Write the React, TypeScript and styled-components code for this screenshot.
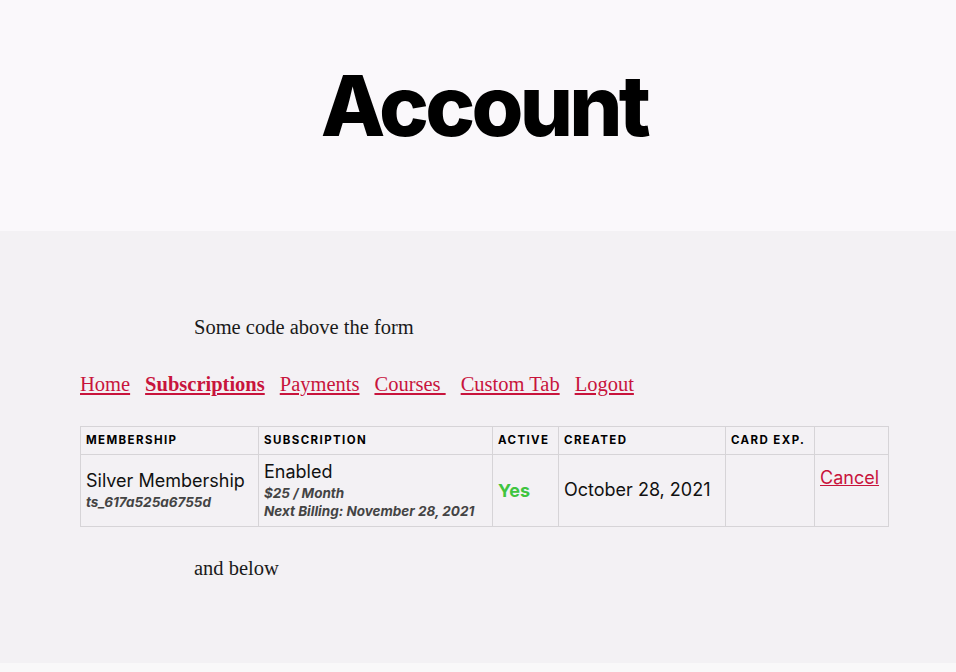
import styled, { createGlobalStyle } from "styled-components";

const GlobalStyle = createGlobalStyle`
  body {
    margin: 0;
    background: #f3f1f4;
    font-family: "Liberation Serif", serif;
  }
`;

const tabs = [
  { label: "Home" },
  { label: "Subscriptions", active: true },
  { label: "Payments" },
  { label: "Courses " },
  { label: "Custom Tab" },
  { label: "Logout" },
];

export default function App() {
  return (
    <Page>
      <GlobalStyle />
      <Header>
        <Title>Account</Title>
      </Header>
      <Content>
        <Note>Some code above the form</Note>
        <Nav>
          {tabs.map((t) => (
            <NavLink key={t.label} href="#" $active={t.active}>
              {t.label}
            </NavLink>
          ))}
        </Nav>
        <Table>
          <colgroup>
            <col style={{ width: 178 }} />
            <col style={{ width: 234 }} />
            <col style={{ width: 66 }} />
            <col style={{ width: 167 }} />
            <col style={{ width: 89 }} />
            <col style={{ width: 74 }} />
          </colgroup>
          <thead>
            <tr>
              <Th>Membership</Th>
              <Th>Subscription</Th>
              <Th>Active</Th>
              <Th>Created</Th>
              <Th>Card Exp.</Th>
              <Th></Th>
            </tr>
          </thead>
          <tbody>
            <tr>
              <Td>
                <Main>Silver Membership</Main>
                <Sub>ts_617a525a6755d</Sub>
              </Td>
              <Td>
                <Main>Enabled</Main>
                <Sub>$25 / Month</Sub>
                <Sub>Next Billing: November 28, 2021</Sub>
              </Td>
              <Td>
                <Yes>Yes</Yes>
              </Td>
              <Td>
                <Main>October 28, 2021</Main>
              </Td>
              <Td></Td>
              <Td $top>
                <CancelLink href="#">Cancel</CancelLink>
              </Td>
            </tr>
          </tbody>
        </Table>
        <Note>and below</Note>
      </Content>
      <Footer />
    </Page>
  );
}

const Page = styled.div`
  min-height: 672px;
  display: flex;
  flex-direction: column;
`;

const Header = styled.header`
  height: 231px;
  background: #faf8fb;
  display: flex;
  align-items: center;
  justify-content: center;
`;

const Title = styled.h1`
  margin: 0;
  font-family: Inter, "Liberation Sans", sans-serif;
  font-weight: 800;
  font-size: 84px;
  letter-spacing: -0.045em;
  color: #000;
  line-height: 1;
  transform: translate(6px, -10px);
`;

const Content = styled.main`
  flex: 1;
  padding: 83px 68px 0 80px;
`;

const Note = styled.p`
  margin: 0;
  padding-left: 114px;
  font-size: 20.5px;
  color: #1a1a1a;
  line-height: 1.3;
`;

const Nav = styled.nav`
  display: flex;
  gap: 15px;
  margin: 32px 0 30px;
`;

const NavLink = styled.a<{ $active?: boolean }>`
  font-size: 20.5px;
  color: #c8143c;
  white-space: pre;
  font-weight: ${(p) => (p.$active ? 700 : 400)};
  text-decoration: underline;
`;

const Table = styled.table`
  width: 808px;
  border-collapse: collapse;
  table-layout: fixed;
  font-family: Inter, "Liberation Sans", sans-serif;
  margin-bottom: 28px;
`;

const Th = styled.th`
  border: 1px solid #d6d4d7;
  text-align: left;
  padding: 6px 5px;
  height: 15px;
  font-size: 11.5px;
  font-weight: 700;
  letter-spacing: 1.4px;
  text-transform: uppercase;
  color: #000;
`;

const Td = styled.td<{ $top?: boolean }>`
  border: 1px solid #d6d4d7;
  padding: 6px 5px;
  vertical-align: ${(p) => (p.$top ? "top" : "middle")};
  white-space: nowrap;
  ${(p) => p.$top && "padding-top: 12px;"}
`;

const Main = styled.div`
  font-size: 18px;
  color: #111;
  line-height: 22px;
`;

const Sub = styled.div`
  font-size: 13.5px;
  font-weight: 700;
  font-style: italic;
  color: #444;
  line-height: 18px;

  ${Main} + & {
    margin-top: 1px;
  }
`;

const Yes = styled.span`
  font-size: 18px;
  font-weight: 700;
  color: #3fc43f;
`;

const CancelLink = styled.a`
  font-size: 18px;
  color: #c8143c;
  text-decoration: underline;
`;

const Footer = styled.footer`
  height: 9px;
  background: #f9f8f9;
`;
